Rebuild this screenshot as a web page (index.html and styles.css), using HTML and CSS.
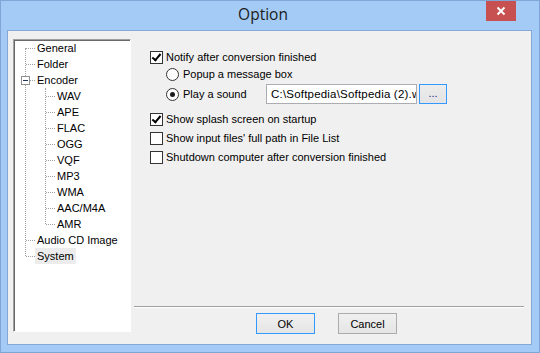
FILE: index.html
```html
<!DOCTYPE html>
<html lang="en">
<head>
    <meta charset="UTF-8">
    <title>Option</title>
    <link rel="stylesheet" href="styles.css">
</head>
<body>
    <div class="window">
        <div class="titlebar">
            <span class="title">Option</span>
            <button class="close-button">
                <svg width="10" height="10" viewBox="0 0 10 10"><path d="M1.5 1.5 L8.5 8.5 M8.5 1.5 L1.5 8.5" stroke="#fff" stroke-width="2"/></svg>
            </button>
        </div>

        <div class="client">
            <div class="tree-panel">
                <ul class="tree">
                    <li>General</li>
                    <li>Folder</li>
                    <li class="expanded">
                        <span class="expander"></span>Encoder
                        <ul class="subtree">
                            <li>WAV</li>
                            <li>APE</li>
                            <li>FLAC</li>
                            <li>OGG</li>
                            <li>VQF</li>
                            <li>MP3</li>
                            <li>WMA</li>
                            <li>AAC/M4A</li>
                            <li>AMR</li>
                        </ul>
                    </li>
                    <li>Audio CD Image</li>
                    <li><span class="selected">System</span></li>
                </ul>
            </div>

            <div class="settings">
                <div class="options">
                    <label class="row row-notify">
                        <span class="checkbox checked"></span>Notify after conversion finished
                    </label>
                    <label class="row row-sub row-popup">
                        <span class="radio"></span>Popup a message box
                    </label>
                    <div class="row row-sub row-play">
                        <label class="sound-label"><span class="radio checked"></span>Play a sound</label>
                        <input class="path-field" type="text" value="C:\Softpedia\Softpedia (2).wav" readonly>
                        <button class="browse-button">...</button>
                    </div>
                    <label class="row row-splash">
                        <span class="checkbox checked"></span>Show splash screen on startup
                    </label>
                    <label class="row row-gap">
                        <span class="checkbox"></span>Show input files' full path in File List
                    </label>
                    <label class="row row-gap">
                        <span class="checkbox"></span>Shutdown computer after conversion finished
                    </label>
                </div>

                <div class="separator"></div>

                <div class="button-row">
                    <button class="dialog-button default">OK</button>
                    <button class="dialog-button">Cancel</button>
                </div>
            </div>
        </div>
    </div>
</body>
</html>
```

FILE: styles.css
```css
html, body {
    margin: 0;
    padding: 0;
}
body {
    font-family: "Liberation Sans", Arial, sans-serif;
    font-size: 11px;
    color: #000;
}
.window {
    width: 540px;
    height: 353px;
    box-sizing: border-box;
    background-color: #a3cbf5;
    border: 1px solid #7fa6d6;
    display: flex;
    flex-direction: column;
}
.titlebar {
    height: 29px;
    position: relative;
    display: flex;
    align-items: center;
    justify-content: center;
    padding-right: 14px;
}
.title {
    font-family: "Open Sans", "Noto Sans", sans-serif;
    font-size: 15.5px;
    color: #1b1b1b;
    margin-top: -3px;
}
.close-button {
    position: absolute;
    top: 0;
    right: 23px;
    width: 30px;
    height: 20px;
    border: none;
    padding: 0;
    background-color: #c75050;
    display: flex;
    align-items: center;
    justify-content: center;
}
.client {
    flex: 1;
    margin: 0 7px 7px 6px;
    border: 1px solid #86a8d6;
    background-color: #f0f0f0;
    display: flex;
}

/* tree */
.tree-panel {
    width: 116px;
    height: 291px;
    margin: 8px 0 0 5px;
    background-color: #fff;
    border-top: 1px solid #a0a0a0;
    border-left: 1px solid #a0a0a0;
    border-right: 1px solid #fff;
    border-bottom: 1px solid #fff;
    box-shadow: inset 1px 1px 0 #696969;
}
.tree, .subtree {
    list-style: none;
    margin: 0;
    padding: 0;
    position: relative;
}
.tree::before {
    content: "";
    position: absolute;
    left: 11px;
    top: 8px;
    bottom: 8px;
    border-left: 1px dotted #a0a0a0;
}
.tree > li {
    position: relative;
    line-height: 16px;
    padding-left: 23px;
    white-space: nowrap;
}
.tree > li::before {
    content: "";
    position: absolute;
    left: 12px;
    top: 8px;
    width: 9px;
    border-top: 1px dotted #a0a0a0;
}
.expander {
    position: absolute;
    left: 7px;
    top: 4px;
    width: 7px;
    height: 7px;
    border: 1px solid #919191;
    background-color: #fff;
    z-index: 1;
}
.expander::after {
    content: "";
    position: absolute;
    left: 1px;
    top: 3px;
    width: 5px;
    height: 1px;
    background-color: #1e395b;
}
.subtree::before {
    content: "";
    position: absolute;
    left: 8px;
    top: 0;
    bottom: 8px;
    border-left: 1px dotted #a0a0a0;
}
.subtree > li {
    position: relative;
    padding-left: 20px;
    line-height: 16px;
}
.subtree > li::before {
    content: "";
    position: absolute;
    left: 9px;
    top: 8px;
    width: 9px;
    border-top: 1px dotted #a0a0a0;
}
.selected {
    display: inline-block;
    background-color: #ececec;
    padding: 0 2px;
    margin-left: -2px;
}

/* settings side */
.settings {
    flex: 1;
    display: flex;
    flex-direction: column;
}
.options {
    flex: 1;
    padding: 18px 0 0 19px;
}
.row {
    display: flex;
    align-items: center;
    height: 16px;
    white-space: nowrap;
}
.row-sub {
    padding-left: 16px;
    margin-top: 1px;
}
.row-play {
    height: 20px;
    margin-top: 2px;
}
.row-splash {
    margin-top: 7px;
}
.row-gap {
    margin-top: 3px;
}
.checkbox {
    width: 11px;
    height: 11px;
    border: 1px solid #333;
    background-color: #fff;
    margin-right: 3px;
    position: relative;
    flex-shrink: 0;
}
.checkbox.checked::after {
    content: "";
    position: absolute;
    left: 3px;
    top: 0px;
    width: 3px;
    height: 7px;
    border-right: 2px solid #000;
    border-bottom: 2px solid #000;
    transform: rotate(40deg);
}
.radio {
    width: 11px;
    height: 11px;
    border: 1px solid #333;
    border-radius: 50%;
    background-color: #fff;
    margin-right: 4px;
    position: relative;
    flex-shrink: 0;
}
.radio.checked::after {
    content: "";
    position: absolute;
    left: 3px;
    top: 3px;
    width: 5px;
    height: 5px;
    border-radius: 50%;
    background-color: #1a1a1a;
}
.sound-label {
    display: flex;
    align-items: center;
    width: 100px;
    flex-shrink: 0;
}
.path-field {
    box-sizing: border-box;
    width: 151px;
    height: 20px;
    margin: 0;
    border: 1px solid #abadb3;
    background-color: #fff;
    padding: 0 0 0 4px;
    font-family: inherit;
    font-size: 11.5px;
    letter-spacing: 0.2px;
    color: #000;
    outline: none;
    flex-shrink: 0;
}
.browse-button {
    width: 28px;
    height: 20px;
    margin-left: 2px;
    border: 1px solid #3399ff;
    background: linear-gradient(#ececec, #e3e3e3);
    font-family: inherit;
    font-size: 11px;
    padding: 0 0 3px;
    color: #1a1a8a;
    flex-shrink: 0;
}
.separator {
    height: 1px;
    margin: 0 7px 0 3px;
    background-color: #a0a0a0;
    border-bottom: 1px solid #fff;
}
.button-row {
    display: flex;
    gap: 23px;
    padding: 5px 0 10px 125px;
}
.dialog-button {
    width: 59px;
    height: 21px;
    border: 1px solid #acacac;
    background: linear-gradient(#f0f0f0, #e5e5e5);
    font-family: inherit;
    font-size: 11px;
    color: #000;
    padding: 0;
}
.dialog-button.default {
    border-color: #3399ff;
}
```
